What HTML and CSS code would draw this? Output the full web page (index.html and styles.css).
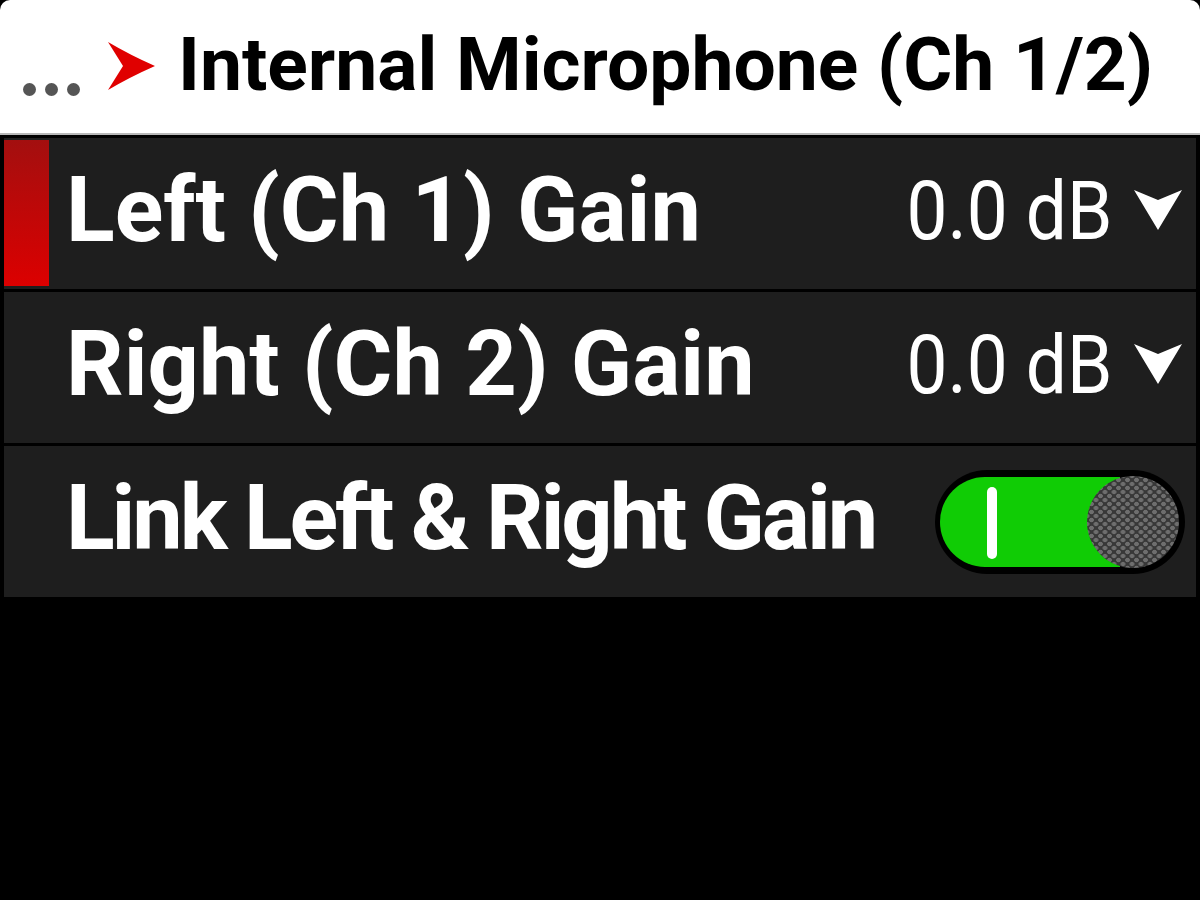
FILE: index.html
```html
<!DOCTYPE html>
<html>
<head>
<meta charset="utf-8">
<link rel="stylesheet" href="styles.css">
</head>
<body>
<div class="screen">
  <header class="header">
    <span class="dots"><i></i><i></i><i></i></span>
    <svg class="arrow" viewBox="0 0 48 50" width="48" height="50"><path d="M0 1 Q22 14 47 25 Q22 36 0 49 L15 25 Z" fill="#e00000"/></svg>
    <h1 class="title">Internal Microphone (Ch 1/2)</h1>
  </header>
  <div class="rows">
    <div class="row selected">
      <span class="marker"></span>
      <span class="label">Left (Ch 1) Gain</span>
      <span class="value">0.0 dB</span>
      <svg class="chev" viewBox="0 0 48 44" width="48" height="44"><path d="M0 3 L24 13 L48 3 L24 43 Z" fill="#fff"/></svg>
    </div>
    <div class="row">
      <span class="label">Right (Ch 2) Gain</span>
      <span class="value">0.0 dB</span>
      <svg class="chev" viewBox="0 0 48 44" width="48" height="44"><path d="M0 3 L24 13 L48 3 L24 43 Z" fill="#fff"/></svg>
    </div>
    <div class="row">
      <span class="label label-fit">Link Left &amp; Right Gain</span>
      <span class="toggle"><span class="bar"></span><span class="knob"></span></span>
    </div>
  </div>
</div>
</body>
</html>
```
FILE: styles.css
```css
html, body { margin: 0; padding: 0; background: #000; }
body { width: 1200px; height: 900px; overflow: hidden; font-family: Roboto, "Liberation Sans", sans-serif; }
.screen { display: flex; flex-direction: column; }
.header {
  height: 133px; background: #fff; border-bottom: 2px solid #b8b8b8;
  border-radius: 10px 10px 0 0; display: flex; align-items: center;
}
.dots { display: flex; gap: 9px; margin-left: 23px; margin-top: 46px; }
.dots i { width: 13px; height: 13px; border-radius: 50%; background: #555; display: block; }
.arrow { margin-left: 28px; margin-top: -2px; }
.title { margin: -4px 0 0 22px; font-size: 75px; font-weight: 700; color: #000; line-height: 1; }
.rows { display: flex; flex-direction: column; gap: 3px; padding: 3px 4px 0 4px; }
.row {
  height: 151px; background: #1e1e1e; display: flex; align-items: center; position: relative;
  padding-left: 62px; padding-right: 14px; color: #fff;
}
.marker { position: absolute; left: 0; top: 2px; bottom: 3px; width: 45px; background: linear-gradient(#a30f0f, #dc0000); }
.label { font-size: 90px; font-weight: 700; flex: 1; margin-top: -6px; line-height: 1; white-space: nowrap; }
.label-fit { letter-spacing: -3.1px; }
.value {
  display: inline-block; font-size: 82px; font-weight: 400; margin-right: 22px; margin-top: -6px; line-height: 1;
  transform: scaleX(0.89); transform-origin: right center;
}
.chev { margin-top: -10px; }
.toggle {
  width: 250px; height: 104px; background: #000; border-radius: 52px; position: relative; margin-right: -3px;
}
.toggle::before {
  content: ""; position: absolute; left: 5px; top: 7px; width: 180px; height: 90px; background: #10cc05; border-radius: 45px 0 0 45px;
}
.bar { position: absolute; left: 52px; top: 17px; width: 10px; height: 72px; background: #fff; border-radius: 5px; }
.knob {
  position: absolute; right: 6px; top: 6px; width: 92px; height: 92px; border-radius: 50%;
  background-color: #383838;
  background-image: radial-gradient(circle, #6e6e6e 2px, transparent 2.6px), radial-gradient(circle, #6e6e6e 2px, transparent 2.6px);
  background-size: 9px 8px; background-position: 0 0, 4.5px 4px;
}
```
